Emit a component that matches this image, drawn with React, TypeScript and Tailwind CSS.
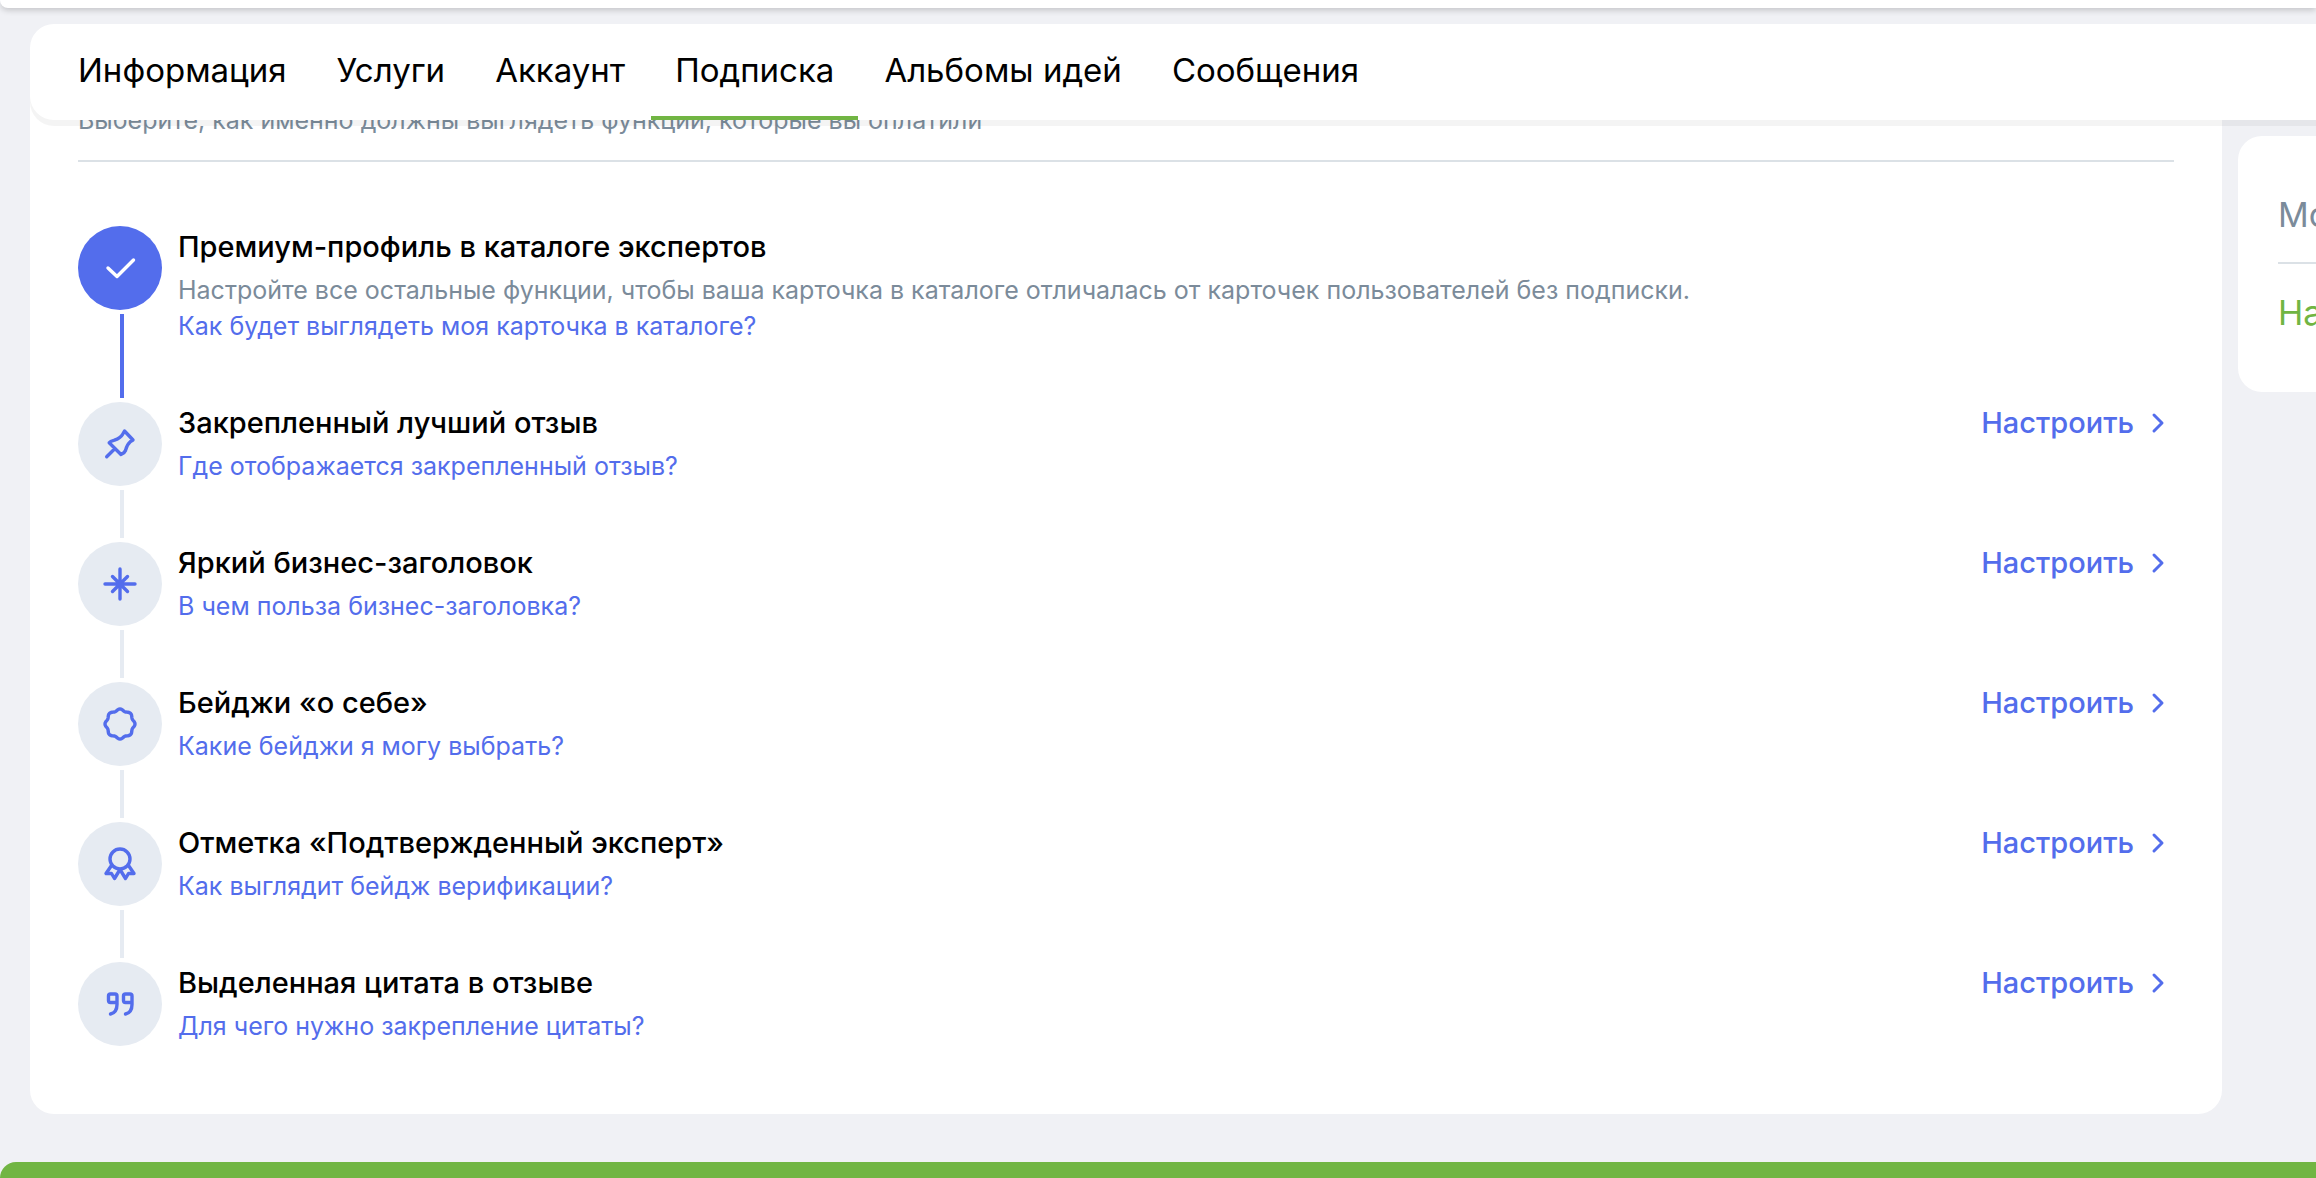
import type { ReactNode } from "react";
import { useState } from "react";

interface Step {
  title: string;
  description?: string;
  link: string;
  icon: ReactNode;
  done?: boolean;
}

const tabs = ["Информация", "Услуги", "Аккаунт", "Подписка", "Альбомы идей", "Сообщения"];

// Circle with eight soft waves
const badgePoints = Array.from({ length: 96 }, (_, i) => {
  const angle = (i / 96) * Math.PI * 2;
  const r = 14.1 + 0.9 * Math.cos(angle * 8);
  return `${(20 + r * Math.cos(angle)).toFixed(2)},${(20 + r * Math.sin(angle)).toFixed(2)}`;
}).join(" ");

const steps: Step[] = [
  {
    title: "Премиум-профиль в каталоге экспертов",
    description:
      "Настройте все остальные функции, чтобы ваша карточка в каталоге отличалась от карточек пользователей без подписки.",
    link: "Как будет выглядеть моя карточка в каталоге?",
    icon: <path d="M8 20 17 28.5 33.5 12" />,
    done: true,
  },
  {
    title: "Закрепленный лучший отзыв",
    link: "Где отображается закрепленный отзыв?",
    icon: (
      <path d="M24.5 7 33 16 L30.5 17.5 C27.5 20 26.5 22 25.5 26.5 Q24.5 29 21 30.5 L9.2 18.8 C10.5 17 12 16.8 14.5 16.2 C19 14.5 21.5 12.5 22.5 10.5ZM14.5 25 6.7 32.8" />
    ),
  },
  {
    title: "Яркий бизнес-заголовок",
    link: "В чем польза бизнес-заголовка?",
    icon: <path d="M20 5V35M5 20H35M12.5 12.5 27.5 27.5M27.5 12.5 12.5 27.5" />,
  },
  {
    title: "Бейджи «о себе»",
    link: "Какие бейджи я могу выбрать?",
    icon: <polygon points={badgePoints} />,
  },
  {
    title: "Отметка «Подтвержденный эксперт»",
    link: "Как выглядит бейдж верификации?",
    icon: (
      <>
        <circle cx="20" cy="15" r="10" />
        <path d="M11.5 21.5 6 29.5 11.5 29.5 14.5 34.5 20 25.5 25.5 34.5 28.5 29.5 34 29.5 28.5 21.5" />
      </>
    ),
  },
  {
    title: "Выделенная цитата в отзыве",
    link: "Для чего нужно закрепление цитаты?",
    icon: (
      <path d="M17 18.5H10.5Q8.5 18.5 8.5 16.5V12Q8.5 10 10.5 10H15Q17 10 17 12V20.5Q17 28.5 10.5 30M32 18.5H25.5Q23.5 18.5 23.5 16.5V12Q23.5 10 25.5 10H30Q32 10 32 12V20.5Q32 28.5 25.5 30" />
    ),
  },
];

function StepRow({ step, last }: { step: Step; last: boolean }) {
  return (
    <li className="flex gap-4">
      {/* Marker and connector */}
      <div className="flex w-[84px] shrink-0 flex-col">
        <div
          className={`flex h-[84px] items-center justify-center rounded-full ${
            step.done ? "bg-[#536dec] text-white" : "bg-[#e6ebf2] text-[#536dec]"
          }`}
        >
          <svg
            viewBox="0 0 40 40"
            className="size-10"
            fill="none"
            stroke="currentColor"
            strokeWidth="3.4"
            strokeLinecap="round"
            strokeLinejoin="round"
            aria-hidden="true"
          >
            {step.icon}
          </svg>
        </div>
        {!last && (
          <div className={`my-1 ml-[42px] w-1 grow ${step.done ? "bg-[#536dec]" : "bg-[#e6ebf2]"}`} />
        )}
      </div>

      {/* Text */}
      <div className={`flex min-w-0 grow flex-col items-start ${last ? "" : "pb-[58px]"}`}>
        <h3 className="mb-1 text-[29px] leading-[42px] font-medium text-black">{step.title}</h3>
        {step.description && (
          <p className="text-[25px] leading-9 text-[#7b8b9a]">{step.description}</p>
        )}
        <a href="#" className="text-[25px] leading-9 text-[#536dec]">
          {step.link}
        </a>
      </div>

      {!step.done && (
        <button
          type="button"
          className="flex h-[42px] shrink-0 items-center gap-2 text-[29px] leading-[42px] font-medium text-[#536dec]"
        >
          Настроить
          <svg
            viewBox="0 0 32 32"
            className="size-8"
            fill="none"
            stroke="currentColor"
            strokeWidth="3"
            strokeLinecap="round"
            strokeLinejoin="round"
            aria-hidden="true"
          >
            <path d="M12 8 20 16 12 24" />
          </svg>
        </button>
      )}
    </li>
  );
}

export default function App() {
  const [active, setActive] = useState("Подписка");

  return (
    <div className="flex min-h-screen flex-col overflow-hidden bg-[#f0f1f5] font-['Inter','Noto_Sans',sans-serif]">
      <header className="h-2 rounded-bl-[16px] bg-white shadow-[0_2px_6px_rgba(0,0,0,0.2)]" />

      <nav className="relative z-10 mt-4 ml-[30px] flex h-24 gap-0.5 rounded-l-3xl bg-white pl-6 shadow-[0_6px_0_rgba(0,0,0,0.045)]">
        {tabs.map((tab) => (
          <button
            key={tab}
            type="button"
            onClick={() => setActive(tab)}
            className={`border-b-4 px-6 text-[33px] leading-10 text-black ${
              tab === active ? "border-[#71b543]" : "border-transparent"
            }`}
          >
            {tab}
          </button>
        ))}
      </nav>

      <div className="-mt-12 flex items-start gap-4 pl-[30px]">
        <main className="min-w-0 grow rounded-b-3xl bg-white px-12 pb-[68px]">
          <p className="border-b-2 border-[#dbe1e6] pt-[30px] pb-[22px] text-[25px] leading-9 text-[#7b8b9a]">
            Выберите, как именно должны выглядеть функции, которые вы оплатили
          </p>
          <ol className="pt-16">
            {steps.map((step, i) => (
              <StepRow key={step.title} step={step} last={i === steps.length - 1} />
            ))}
          </ol>
        </main>

        <aside className="mt-16 h-64 w-[78px] shrink-0 overflow-hidden rounded-l-3xl bg-white pt-14 pl-10">
          <p className="border-b-2 border-[#dbe1e6] pb-6 text-[34px] leading-[46px] whitespace-nowrap text-[#7b8b9a]">
            Мо
          </p>
          <a href="#" className="mt-[26px] block text-[34px] leading-[46px] whitespace-nowrap text-[#71b543]">
            На
          </a>
        </aside>
      </div>

      <footer className="mt-12 h-4 grow rounded-tl-[16px] bg-[#71b543]" />
    </div>
  );
}
